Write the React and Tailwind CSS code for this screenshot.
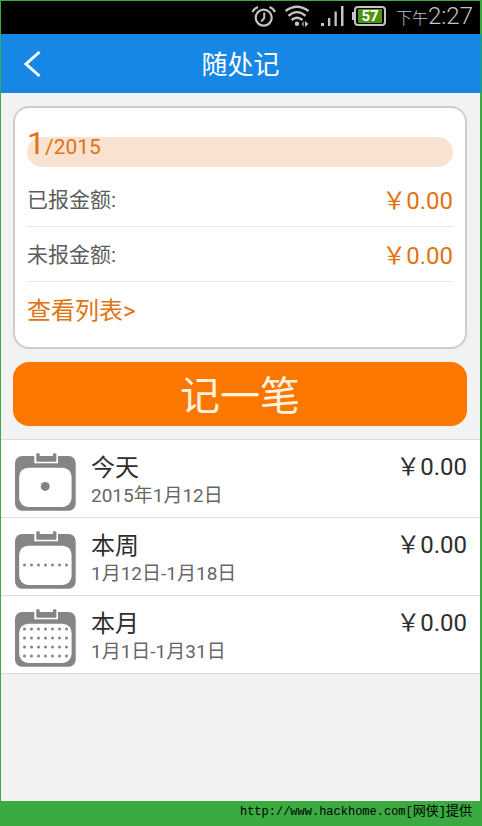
import React from "react";

const summary = [
  { label: "已报金额:", amount: "￥0.00" },
  { label: "未报金额:", amount: "￥0.00" },
];

const dotColumns = [10, 17, 24, 31, 38, 45, 52];

const periods = [
  { title: "今天", range: "2015年1月12日", amount: "￥0.00", rows: [] },
  { title: "本周", range: "1月12日-1月18日", amount: "￥0.00", rows: [35] },
  {
    title: "本月",
    range: "1月1日-1月31日",
    amount: "￥0.00",
    rows: [21, 30, 39, 48],
  },
];

const CalendarIcon = ({ rows }) => (
  <svg
    viewBox="0 0 62 60"
    className="h-[60px] w-[62px] flex-none"
    aria-hidden="true"
  >
    <rect x="1" y="4" width="60.7" height="54.7" rx="7" fill="#858585" />
    <rect x="5.2" y="15.7" width="52.4" height="39.2" rx="9" fill="#fff" />
    <path d="M20.3 0h23.7v11.3H20.3z" fill="#fff" />
    <path
      d="M22.3 2.3q0-1 1-1h1.4q1 0 1 1v1.700h13.3V2.3q0-1 1-1h1.4q1 0 1 1v6.4q0 1-1 1H23.3q-1 0-1-1z"
      fill="#858585"
    />
    {rows.length === 0 && <circle cx="31.2" cy="34.4" r="4.5" fill="#858585" />}
    {rows.map((y) =>
      dotColumns.map((x) => (
        <circle key={`${x}-${y}`} cx={x + 0.5} cy={y} r="1.5" fill="#858585" />
      ))
    )}
  </svg>
);

const StatusBar = () => (
  <div className="flex h-[33px] items-center justify-end bg-black pr-[7px] pb-[3px] text-[#c4c4c4]">
    <svg
      viewBox="0 0 26 24"
      className="mr-[7px] h-6 w-[26px]"
      fill="none"
      stroke="currentColor"
      aria-hidden="true"
    >
      <circle cx="12.7" cy="13.7" r="8" strokeWidth="2.2" />
      <path d="M13.2 8.5v5.7l-3 3.3" strokeWidth="2" />
      <path d="M1.500 8Q3 4.500 7 3M24 8Q22.500 4.500 18.500 3" strokeWidth="2.2" />
    </svg>
    <svg
      viewBox="0 0 26 24"
      className="mr-[11px] h-6 w-[26px]"
      fill="none"
      stroke="currentColor"
      aria-hidden="true"
    >
      <path d="M1.500 7Q13-1.500 24.500 7" strokeWidth="2.3" />
      <path d="M4.500 11.800Q13 4.500 21.500 11.800" strokeWidth="2.3" />
      <path d="M7.500 16Q13 11.500 18.500 16" strokeWidth="2.3" />
      <circle cx="13" cy="19.700" r="2.2" fill="currentColor" stroke="none" />
      <path d="M20 17v6l-3-3z" fill="#777" stroke="none" />
      <path d="M21 17v6l3.500-3z" fill="currentColor" stroke="none" />
    </svg>
    <svg
      viewBox="0 0 24 24"
      className="mr-[7px] h-6 w-6"
      fill="currentColor"
      aria-hidden="true"
    >
      <path d="M0 19h3v3H0zM7 14h2.300v8H7zM13.500 7.500h2.300V22h-2.300zM20 2h2.500v20H20z" />
    </svg>
    <div className="mr-[10px] flex items-center">
      <span className="h-2 w-[2px] bg-current" />
      <span className="flex h-5 w-8 items-center justify-center rounded-sm border-2 border-current">
        <span className="h-[14px] w-6 bg-[#4e9413] text-center text-[15px] leading-[14px] font-bold text-white">
          57
        </span>
      </span>
    </div>
    <span className="flex items-baseline font-light">
      <span className="text-base">下午</span>
      <span className="text-2xl">2:27</span>
    </span>
  </div>
);

const App = () => {
  return (
    <div className="flex min-h-screen flex-col bg-[#3aaa41] pt-px pr-[2px] pl-px font-[Roboto,'Noto_Sans_CJK_SC',sans-serif]">
      <StatusBar />
      <header className="-mr-[2px] grid h-[59px] grid-cols-3 items-center border-r-2 border-[#1a9a9c] bg-[#1787e5] text-white">
        <button type="button" aria-label="返回" className="w-fit px-5 py-3">
          <svg viewBox="0 0 22 28" className="h-7 w-[22px]" aria-hidden="true">
            <path
              d="M18.500 2L5 14L18.500 26"
              fill="none"
              stroke="#fff"
              strokeWidth="3"
            />
          </svg>
        </button>
        <h1 className="pt-1 text-center text-[26px]">随处记</h1>
      </header>

      <main className="flex-1 bg-[#f2f2f2] pt-[13px]">
        <section className="mr-[13px] ml-3 rounded-2xl border-2 border-[#cecece] bg-white px-3 pt-[29px]">
          <h2 className="flex h-[30px] items-end rounded-full bg-[#fae2d0] text-[#e07410]">
            <span className="flex items-baseline">
              <span className="text-[32px]">1</span>
              <span className="text-[21px]">/2015</span>
            </span>
          </h2>
          <dl className="pt-[5px]">
            {summary.map((item) => (
              <div
                key={item.label}
                className="flex h-[55px] items-center justify-between border-b border-[#e6e6e6] pt-[3px]"
              >
                <dt className="text-[21px] text-[#5c5c5c]">{item.label}</dt>
                <dd className="text-2xl text-[#e07410]">{item.amount}</dd>
              </div>
            ))}
          </dl>
          <a
            href="#list"
            className="flex h-[65px] w-fit items-center pb-2 text-2xl text-[#e07410]"
          >
            查看列表&gt;
          </a>
        </section>

        <div className="py-[13px] pr-[13px] pl-3">
          <button
            type="button"
            className="h-16 w-full rounded-2xl bg-[#fc7700] pt-[6px] text-[40px] leading-[58px] text-[#fff3e0]"
          >
            记一笔
          </button>
        </div>

        <ul id="list" className="border-t border-[#dcdcdc] bg-white">
          {periods.map((period) => (
            <li
              key={period.title}
              className="flex h-[78px] items-start border-b border-[#dcdcdc] px-[13px] pt-3"
            >
              <CalendarIcon rows={period.rows} />
              <div className="ml-[15px] flex-1">
                <h3 className="text-2xl leading-8 text-[#2e2e2e]">
                  {period.title}
                </h3>
                <p className="text-[19px] leading-6 text-[#666]">
                  {period.range}
                </p>
              </div>
              <span className="text-2xl leading-[30px] text-[#2e2e2e]">
                {period.amount}
              </span>
            </li>
          ))}
        </ul>
      </main>

      <footer className="h-[25px] pr-2 text-right font-['Liberation_Mono','Noto_Sans_CJK_SC',monospace] text-xs leading-[22px] text-black">
        http://www.hackhome.com[<span className="text-[13px]">网侠</span>]
        <span className="text-[13px]">提供</span>
      </footer>
    </div>
  );
};

export default App;
